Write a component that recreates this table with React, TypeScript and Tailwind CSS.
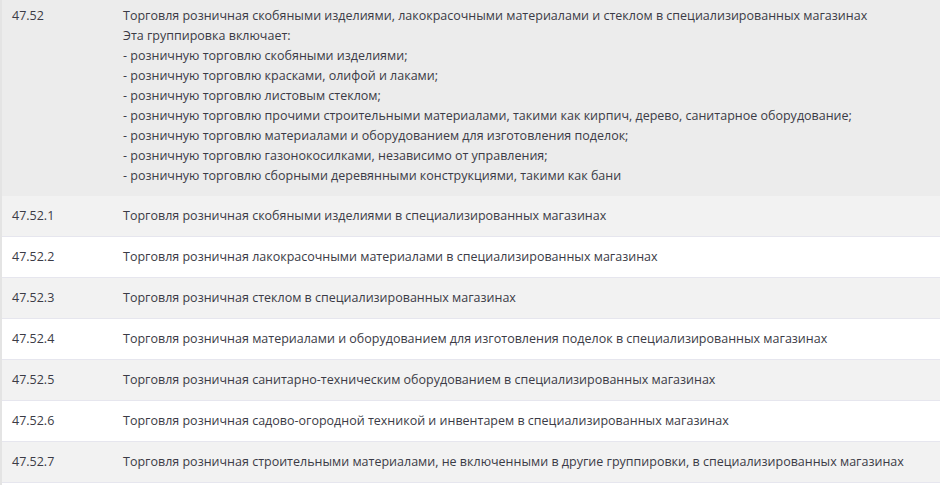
const rows = [
  ["47.52.1", "Торговля розничная скобяными изделиями в специализированных магазинах"],
  ["47.52.2", "Торговля розничная лакокрасочными материалами в специализированных магазинах"],
  ["47.52.3", "Торговля розничная стеклом в специализированных магазинах"],
  ["47.52.4", "Торговля розничная материалами и оборудованием для изготовления поделок в специализированных магазинах"],
  ["47.52.5", "Торговля розничная санитарно-техническим оборудованием в специализированных магазинах"],
  ["47.52.6", "Торговля розничная садово-огородной техникой и инвентарем в специализированных магазинах"],
  ["47.52.7", "Торговля розничная строительными материалами, не включенными в другие группировки, в специализированных магазинах"],
];

const includes = [
  "Эта группировка включает:",
  "- розничную торговлю скобяными изделиями;",
  "- розничную торговлю красками, олифой и лаками;",
  "- розничную торговлю листовым стеклом;",
  "- розничную торговлю прочими строительными материалами, такими как кирпич, дерево, санитарное оборудование;",
  "- розничную торговлю материалами и оборудованием для изготовления поделок;",
  "- розничную торговлю газонокосилками, независимо от управления;",
  "- розничную торговлю сборными деревянными конструкциями, такими как бани",
];

export default function App() {
  return (
    <div
      className="w-[940px] h-[485px] overflow-hidden bg-white text-[12.5px] leading-5 text-[#3b3b46] border-l-2 border-[#e4e4e4]"
      style={{ fontFamily: '"Open Sans", "Noto Sans", sans-serif' }}
    >
      <div className="flex bg-[#ececec] pt-[6px] pb-[10px]">
        <div className="w-[121px] shrink-0 pl-[10px]">47.52</div>
        <div>
          <div>
            Торговля розничная скобяными изделиями, лакокрасочными материалами и стеклом в специализированных магазинах
          </div>
          {includes.map((line) => (
            <div key={line}>{line}</div>
          ))}
        </div>
      </div>
      {rows.map(([code, name], i) => (
        <div
          key={code}
          className={`flex items-center h-[41px] border-b border-[#e6e6ee] ${
            i % 2 === 0 ? "bg-[#f2f2f2]" : "bg-white"
          }`}
        >
          <div className="w-[121px] shrink-0 pl-[10px]">{code}</div>
          <div>{name}</div>
        </div>
      ))}
      <div className="h-[41px] bg-white" />
    </div>
  );
}
